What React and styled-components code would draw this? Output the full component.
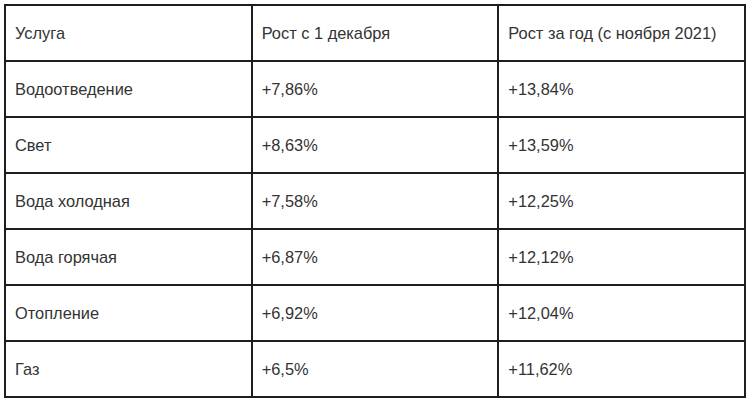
import React from 'react'
import styled, { createGlobalStyle } from 'styled-components'

const Global = createGlobalStyle`
  html, body { margin: 0; padding: 0; background: #fff; }
  body { font-family: "Liberation Sans", Arial, sans-serif; }
`

const Wrap = styled.div`
  padding: 4px 4px 0 4px;
`

const Table = styled.table`
  width: 742px;
  border-collapse: collapse;
  table-layout: fixed;
  color: #333;
  font-size: 16.4px;
`

const Cell = styled.td`
  border: 2px solid #1e1e1e;
  height: 54px;
  padding: 0 9px;
  text-align: left;
  vertical-align: middle;
  font-weight: normal;
`

const rows = [
  ['Водоотведение', '+7,86%', '+13,84%'],
  ['Свет', '+8,63%', '+13,59%'],
  ['Вода холодная', '+7,58%', '+12,25%'],
  ['Вода горячая', '+6,87%', '+12,12%'],
  ['Отопление', '+6,92%', '+12,04%'],
  ['Газ', '+6,5%', '+11,62%'],
]

const App = () => {
  return (
    <Wrap>
      <Global />
      <Table>
        <thead>
          <tr>
            <Cell as="th">Услуга</Cell>
            <Cell as="th">Рост с 1 декабря</Cell>
            <Cell as="th">Рост за год (с ноября 2021)</Cell>
          </tr>
        </thead>
        <tbody>
          {rows.map((r) => (
            <tr key={r[0]}>
              {r.map((c, i) => <Cell key={i}>{c}</Cell>)}
            </tr>
          ))}
        </tbody>
      </Table>
    </Wrap>
  )
}

export default App
